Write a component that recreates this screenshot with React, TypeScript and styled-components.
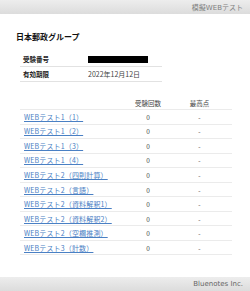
import React from "react";
import styled, { createGlobalStyle } from "styled-components";

const GlobalStyle = createGlobalStyle`
  html, body {
    margin: 0;
    padding: 0;
    background: #ffffff;
  }
  body {
    font-family: "DejaVu Sans", "Noto Sans CJK JP", sans-serif;
    color: #222;
  }
`;

const Page = styled.div`
  width: 250px;
  height: 291px;
  display: flex;
  flex-direction: column;
  overflow: hidden;
`;

const Bar = styled.div`
  height: 14px;
  display: flex;
  justify-content: flex-end;
  align-items: center;
  padding-right: 7px;
  background: linear-gradient(#ededed, #dcdcdc);
  color: #808080;
  font-size: 7px;
  flex-shrink: 0;
`;

const Main = styled.div`
  padding: 18px 0 0 16px;
  flex: 1;
`;

const Title = styled.div`
  font-family: "Noto Sans CJK JP", sans-serif;
  font-weight: bold;
  font-size: 8px;
  line-height: 10px;
  color: #111;
`;

const InfoTable = styled.div`
  margin: 10px 0 0 4px;
  width: 142px;
`;

const InfoRow = styled.div`
  display: flex;
  align-items: center;
  height: 14px;
  border-bottom: 1px solid #e2e2e2;
  font-size: 6.5px;
`;

const InfoLabel = styled.div`
  width: 65px;
  padding-left: 3px;
  font-family: "Noto Sans CJK JP", sans-serif;
  font-weight: bold;
`;

const InfoValue = styled.div`
  font-family: "Noto Sans CJK JP", sans-serif;
  font-size: 7px;
  color: #444;
`;

const Masked = styled.div`
  width: 60px;
  height: 7px;
  background: #000;
`;

const Results = styled.div`
  margin: 14px 0 0 4px;
  width: 212px;
`;

const ResultRow = styled.div<{ $head?: boolean }>`
  display: grid;
  grid-template-columns: 102px 52px 51px 1fr;
  align-items: center;
  height: ${(p) => (p.$head ? "13px" : "13.55px")};
  border-bottom: 1px solid #ebebeb;
  font-size: 6.5px;
  color: #444;
`;

const Cell = styled.div<{ $center?: boolean }>`
  text-align: ${(p) => (p.$center ? "center" : "left")};
  font-family: "Noto Sans CJK JP", sans-serif;
`;

const TestLink = styled.a`
  padding-left: 4px;
  color: #4a80c4;
  text-decoration: underline;
  font-size: 7px;
  letter-spacing: 0.15px;
`;

const Footer = styled(Bar)`
  margin-top: auto;
  height: 14px;
  font-size: 7px;
  color: #666;
`;

const tests = [
  "WEBテスト1（1）",
  "WEBテスト1（2）",
  "WEBテスト1（3）",
  "WEBテスト1（4）",
  "WEBテスト2（四則計算）",
  "WEBテスト2（言語）",
  "WEBテスト2（資料解釈1）",
  "WEBテスト2（資料解釈2）",
  "WEBテスト2（空欄推測）",
  "WEBテスト3（計数）",
];

export default function App() {
  return (
    <Page>
      <GlobalStyle />
      <Bar>模擬WEBテスト</Bar>
      <Main>
        <Title>日本郵政グループ</Title>
        <InfoTable>
          <InfoRow>
            <InfoLabel>受験番号</InfoLabel>
            <Masked />
          </InfoRow>
          <InfoRow>
            <InfoLabel>有効期限</InfoLabel>
            <InfoValue>2022年12月12日</InfoValue>
          </InfoRow>
        </InfoTable>
        <Results>
          <ResultRow $head>
            <Cell />
            <Cell $center>受験回数</Cell>
            <Cell $center>最高点</Cell>
            <Cell />
          </ResultRow>
          {tests.map((t) => (
            <ResultRow key={t}>
              <Cell>
                <TestLink href="#">{t}</TestLink>
              </Cell>
              <Cell $center>0</Cell>
              <Cell $center>-</Cell>
              <Cell />
            </ResultRow>
          ))}
        </Results>
      </Main>
      <Footer>Bluenotes Inc.</Footer>
    </Page>
  );
}
